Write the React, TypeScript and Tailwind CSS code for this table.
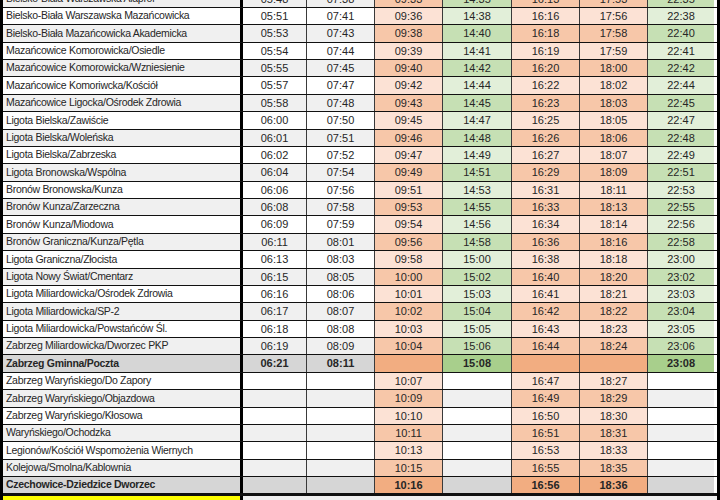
type Row = {
  name: string;
  t: string[];
  strong?: boolean;
};

const rows: Row[] = [
  { name: "Bielsko-Biała Warszawska Alaprof", t: ["05:48", "07:38", "09:33", "14:35", "16:13", "17:53", "22:35"] },
  { name: "Bielsko-Biała Warszawska Mazańcowicka", t: ["05:51", "07:41", "09:36", "14:38", "16:16", "17:56", "22:38"] },
  { name: "Bielsko-Biała Mazańcowicka Akademicka", t: ["05:53", "07:43", "09:38", "14:40", "16:18", "17:58", "22:40"] },
  { name: "Mazańcowice Komorowicka/Osiedle", t: ["05:54", "07:44", "09:39", "14:41", "16:19", "17:59", "22:41"] },
  { name: "Mazańcowice Komorowicka/Wzniesienie", t: ["05:55", "07:45", "09:40", "14:42", "16:20", "18:00", "22:42"] },
  { name: "Mazańcowice Komoriwcka/Kościół", t: ["05:57", "07:47", "09:42", "14:44", "16:22", "18:02", "22:44"] },
  { name: "Mazańcowice Ligocka/Ośrodek Zdrowia", t: ["05:58", "07:48", "09:43", "14:45", "16:23", "18:03", "22:45"] },
  { name: "Ligota Bielska/Zawiście", t: ["06:00", "07:50", "09:45", "14:47", "16:25", "18:05", "22:47"] },
  { name: "Ligota Bielska/Woleńska", t: ["06:01", "07:51", "09:46", "14:48", "16:26", "18:06", "22:48"] },
  { name: "Ligota Bielska/Zabrzeska", t: ["06:02", "07:52", "09:47", "14:49", "16:27", "18:07", "22:49"] },
  { name: "Ligota Bronowska/Wspólna", t: ["06:04", "07:54", "09:49", "14:51", "16:29", "18:09", "22:51"] },
  { name: "Bronów Bronowska/Kunza", t: ["06:06", "07:56", "09:51", "14:53", "16:31", "18:11", "22:53"] },
  { name: "Bronów Kunza/Zarzeczna", t: ["06:08", "07:58", "09:53", "14:55", "16:33", "18:13", "22:55"] },
  { name: "Bronów Kunza/Miodowa", t: ["06:09", "07:59", "09:54", "14:56", "16:34", "18:14", "22:56"] },
  { name: "Bronów Graniczna/Kunza/Pętla", t: ["06:11", "08:01", "09:56", "14:58", "16:36", "18:16", "22:58"] },
  { name: "Ligota Graniczna/Złocista", t: ["06:13", "08:03", "09:58", "15:00", "16:38", "18:18", "23:00"] },
  { name: "Ligota Nowy Świat/Cmentarz", t: ["06:15", "08:05", "10:00", "15:02", "16:40", "18:20", "23:02"] },
  { name: "Ligota Miliardowicka/Ośrodek Zdrowia", t: ["06:16", "08:06", "10:01", "15:03", "16:41", "18:21", "23:03"] },
  { name: "Ligota Miliardowicka/SP-2", t: ["06:17", "08:07", "10:02", "15:04", "16:42", "18:22", "23:04"] },
  { name: "Ligota Miliardowicka/Powstańców Śl.", t: ["06:18", "08:08", "10:03", "15:05", "16:43", "18:23", "23:05"] },
  { name: "Zabrzeg Miliardowicka/Dworzec PKP", t: ["06:19", "08:09", "10:04", "15:06", "16:44", "18:24", "23:06"] },
  { name: "Zabrzeg Gminna/Poczta", t: ["06:21", "08:11", "", "15:08", "", "", "23:08"], strong: true },
  { name: "Zabrzeg Waryńskiego/Do Zapory", t: ["", "", "10:07", "", "16:47", "18:27", ""] },
  { name: "Zabrzeg Waryńskiego/Objazdowa", t: ["", "", "10:09", "", "16:49", "18:29", ""] },
  { name: "Zabrzeg Waryńskiego/Kłosowa", t: ["", "", "10:10", "", "16:50", "18:30", ""] },
  { name: "Waryńskiego/Ochodzka", t: ["", "", "10:11", "", "16:51", "18:31", ""] },
  { name: "Legionów/Kościół Wspomożenia Wiernych", t: ["", "", "10:13", "", "16:53", "18:33", ""] },
  { name: "Kolejowa/Smolna/Kablownia", t: ["", "", "10:15", "", "16:55", "18:35", ""] },
  { name: "Czechowice-Dziedzice Dworzec", t: ["", "", "10:16", "", "16:56", "18:36", ""], strong: true },
];

// column kinds: plain (gray/white), orange, green
const kinds = ["plain", "plain", "orange", "green", "orange", "orange", "green"];
const widths = ["w-[64px]", "w-[68px]", "w-[68px]", "w-[69px]", "w-[68px]", "w-[68px]", "w-[66px]"];

const palette = {
  plain: { light: "bg-white", mid: "bg-[#f0f0f0]", dark: "bg-[#d6d6d6]" },
  orange: { light: "bg-[#fce2d5]", mid: "bg-[#f7c7a9]", dark: "bg-[#f2ad81]" },
  green: { light: "bg-[#e2efd9]", mid: "bg-[#c6e0b4]", dark: "bg-[#a8cf8c]" },
};

const shadeOf = (i: number, strong?: boolean) => {
  if (strong) return "dark";
  if (i <= 20) return i % 2 === 0 ? "mid" : "light";
  return i % 2 === 0 ? "light" : "mid";
};

const App = () => {
  return (
    <div className="w-[720px] h-[500px] overflow-hidden bg-white font-['Liberation_Sans',Arial,sans-serif] text-[11px] text-[#262626]">
      <div className="-mt-[9.4px] border-x-[3px] border-black">
        {rows.map((row, i) => {
          const shade = shadeOf(i, row.strong);
          const last = i === rows.length - 1;
          return (
            <div
              key={i}
              className={`flex ${last ? "border-b-[3px] h-[19.375px]" : "border-b h-[17.375px]"} border-[#111] ${row.strong ? "font-bold" : ""}`}
            >
              <div
                className={`w-[240px] shrink-0 border-r-[3px] border-black pl-[3px] flex items-center whitespace-nowrap overflow-hidden text-[10.5px] tracking-[-0.3px] ${palette.plain[shade]}`}
              >
                {row.name}
              </div>
              {row.t.map((time, c) => {
                const kind = kinds[c] as keyof typeof palette;
                // green columns go blank below the Gminna stop
                const useKind = kind === "green" && i > 21 ? "plain" : kind;
                return (
                  <div
                    key={c}
                    className={`${widths[c]} shrink-0 flex items-center justify-center ${c < 6 ? "border-r border-[#3a3a3a]" : ""} ${palette[useKind][shade]}`}
                  >
                    {time}
                  </div>
                );
              })}
            </div>
          );
        })}
        <div className="flex h-[12px]">
          <div className="w-[240px] shrink-0 border-r-[3px] border-black bg-[#ffff00]" />
          <div className="flex-1 bg-[#f0f0f0]" />
        </div>
      </div>
    </div>
  );
};

export default App;
